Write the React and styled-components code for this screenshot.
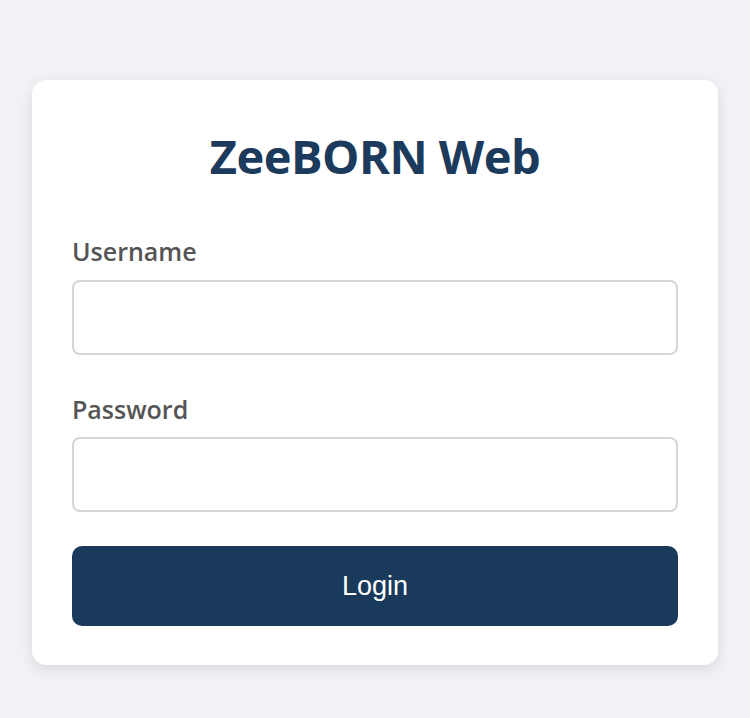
import React from "react";
import styled, { createGlobalStyle } from "styled-components";

const GlobalStyle = createGlobalStyle`
  * {
    box-sizing: border-box;
  }

  body {
    margin: 0;
    background-color: #f0f2f5;
    font-family: "Open Sans", "Noto Sans", sans-serif;
  }
`;

const Page = styled.div`
  min-height: 718px;
  padding: 80px 32px 0;
`;

const Card = styled.div`
  background-color: #fff;
  border-radius: 14px;
  padding: 46px 40px 39px;
  box-shadow: 0 4px 14px rgba(0, 0, 0, 0.1);
`;

const Title = styled.h1`
  margin: 0 0 48px;
  text-align: center;
  color: #1b3a5c;
  font-size: 47px;
  font-weight: 700;
  line-height: 1.3;
  letter-spacing: -0.5px;
`;

const Field = styled.div`
  margin-bottom: ${(p) => p.$gap}px;
`;

const Label = styled.label`
  display: block;
  margin-bottom: 12px;
  color: #555;
  font-size: 25px;
  font-weight: 600;
  line-height: 1.3;
`;

const Input = styled.input`
  display: block;
  width: 100%;
  height: 75px;
  padding: 0 16px;
  border: 2px solid #d3d5d8;
  border-radius: 8px;
  font-size: 22px;
  font-family: inherit;
  outline: none;
`;

const Button = styled.button`
  display: block;
  width: 100%;
  height: 80px;
  border: none;
  border-radius: 10px;
  background-color: #1a3a5c;
  color: #fff;
  font-family: "Liberation Sans", Arial, sans-serif;
  font-size: 27px;
  cursor: pointer;
`;

export default function App() {
  return (
    <>
      <GlobalStyle />
      <Page>
        <Card>
          <Title>ZeeBORN Web</Title>
          <Field $gap={38}>
            <Label htmlFor="username">Username</Label>
            <Input id="username" type="text" />
          </Field>
          <Field $gap={34}>
            <Label htmlFor="password">Password</Label>
            <Input id="password" type="password" />
          </Field>
          <Button>Login</Button>
        </Card>
      </Page>
    </>
  );
}
